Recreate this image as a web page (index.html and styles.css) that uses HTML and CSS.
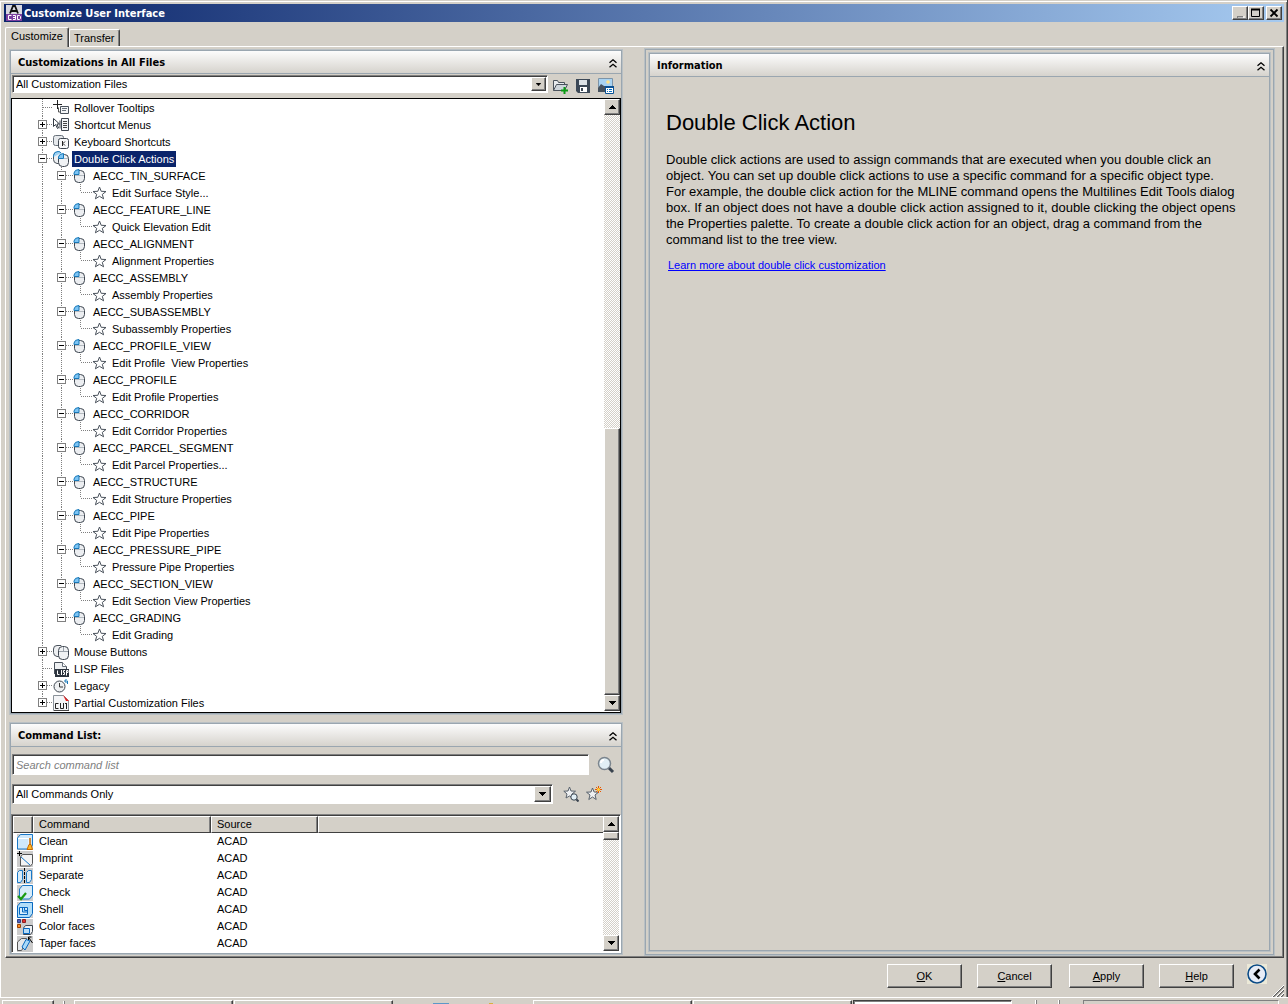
FILE: index.html
```html
<!DOCTYPE html>
<html lang="en">
<head>
<meta charset="utf-8">
<title>Customize User Interface</title>
<link rel="stylesheet" href="styles.css">
</head>
<body>
<svg class="defs" width="0" height="0" aria-hidden="true">
  <defs>
    <symbol id="up" viewBox="0 0 7 4"><path d="M3 0h1v1h1v1h1v1h1v1H0V3h1V2h1V1h1z"/></symbol>
    <symbol id="down" viewBox="0 0 7 4"><path d="M0 0h7v1H6v1H5v1H4v1H3V3H2V2H1V1H0z"/></symbol>
    <symbol id="collapse" viewBox="0 0 8 9"><path d="M.5 3.800L4 .8l3.500 3M.5 8.300L4 5.300l3.500 3" fill="none" stroke="#000" stroke-width="1.300"/></symbol>
    <symbol id="star" viewBox="0 0 16 16"><path d="M8.500 2l1.700 4.300 4.800.2-3.700 2.900 1.300 4.400-4.100-2.500-4.100 2.500 1.300-4.400L2 6.500l4.800-.2z" fill="#fff" stroke="#4a525c"/></symbol>
    <symbol id="mouse" viewBox="0 0 16 16"><rect x="2.500" y="2.500" width="10" height="12" rx="4" fill="#eceef1" stroke="#3e4650"/><path d="M2 6.500V5q.5-3.500 5-3.500v5z" fill="#7cc4f4" stroke="#1878b8"/><path d="M3 7.500h9" stroke="#b4bac0"/></symbol>
    <symbol id="mice" viewBox="0 0 16 16"><path d="M6 12.500H4Q.5 12 .5 8.500V5Q.5 1.500 4 1.500h2" fill="#eef0f2" stroke="#4a525c"/><path d="M6 1.500h2l1 1" fill="none" stroke="#4a525c"/><rect x="5.500" y="2.500" width="10" height="13" rx="4" fill="#f0f2f4" stroke="#3e4650"/><path d="M6 7.500h9M10.500 3v4" stroke="#9aa2aa"/></symbol>
    <symbol id="mice2" viewBox="0 0 16 16"><path d="M6 12.500H4Q.5 12 .5 8.500V5Q.5 1.500 4 1.500h2" fill="#eef0f2" stroke="#4a525c"/><path d="M.5 6V4.500Q1 .5 5 .5q2.500 0 3 1.500" fill="#9ed2f4" stroke="#1878b8"/><rect x="5.500" y="3.500" width="10" height="12" rx="4" fill="#f0f2f4" stroke="#3e4650"/><path d="M5.500 7.500V6q.5-3.500 5-3.500v5z" fill="#7cc4f4" stroke="#1878b8"/><path d="M11 7.500h4" stroke="#b4bac0"/></symbol>
    <symbol id="tooltip" viewBox="0 0 16 16"><path d="M4.500 0v9M0 4.500h9" stroke="#222"/><path d="M5.500 7.500V12h2" fill="none" stroke="#555"/><path d="M7.500 6.500h8v7h-8z" fill="#f4f6f8" stroke="#4a525c"/><path d="M9 8.500h5M9 10.500h4" stroke="#68717b"/></symbol>
    <symbol id="menus" viewBox="0 0 16 16"><path d="M.5 1.500v8l2-2 2 4 1-.5-1.500-4h2.500z" fill="#fff" stroke="#333b44"/><path d="M8.500 1.500h7v12h-7zM7 3.500v8" fill="#f4f6f8" stroke="#3e4650"/><path d="M10 4.500h4M10 6.500h4M10 8.500h4M10 10.500h4" stroke="#444"/></symbol>
    <symbol id="keys" viewBox="0 0 16 16"><rect x=".5" y="1.500" width="10" height="10" rx="2" fill="#e6e9ec" stroke="#68717b"/><rect x="5.500" y="4.500" width="10" height="10" rx="2" fill="#f7f8f9" stroke="#3e4650"/><path d="M9.500 7v5M12 7.500L10 9.500l2 2" fill="none" stroke="#222"/></symbol>
    <symbol id="lisp" viewBox="0 0 16 16"><path d="M1.500 13V1.500h8l4 4V10" fill="#eef0f2" stroke="#4a525c"/><path d="M9.500 1.500v4h4" fill="#fff" stroke="#68717b"/><path d="M2 8h14v8H2z" fill="#2c343e"/><path d="M4.500 9.500v4h2M8.500 9v5M12 9.500h-1.500v2h1v2H10M13.500 14.500v-5H15v2h-1" fill="none" stroke="#fff"/></symbol>
    <symbol id="legacy" viewBox="0 0 16 16"><circle cx="6.500" cy="8.500" r="5.500" fill="#eef0f2" stroke="#3e4650"/><path d="M6.500 5v4H10" fill="none" stroke="#333"/><path d="M12 3h2.500v3M13.500 1l-2 2 2 2" fill="none" stroke="#1878b8"/></symbol>
    <symbol id="cui" viewBox="0 0 16 16"><path d="M.5 15.500V.5h10l5 5v10z" fill="#f4f5f7" stroke="#8a929a"/><path d="M10 0l6 6h-3z" fill="#e02020"/><path d="M5.500 8.500h-3v5h3M7.500 8v5.500h3V8M13.500 8v6M12 8.500h2" fill="none" stroke="#222"/><path d="M1 15.500h15" stroke="#444"/></symbol>
  </defs>
</svg>
<main class="window">
  <header class="titlebar">
    <svg class="appicon" width="16" height="16" viewBox="0 0 16 16"><path fill="#d8d8e0" d="M0 0h16v9H0z"/><path fill="#7b3fa0" d="M0 9h16v7H0z"/><path d="M4 8.500L7 1h2l3 7.500M5.500 6h5" fill="none" stroke="#111" stroke-width="1.800"/><path d="M5.500 10.500h-3v4h3M7 10.500h2.500v4H7M7 12.500h2.500M11.500 10.500h2l1 1v2l-1 1h-2z" fill="none" stroke="#fff"/></svg>
    <h1>Customize User Interface</h1>
    <div class="winbtns">
      <button aria-label="Minimize"><svg width="10" height="10" viewBox="0 0 10 10"><path d="M2 8h6v2H2z" fill="#808080"/><path d="M3 10h6V8" stroke="#fff" fill="none"/></svg></button><button aria-label="Maximize"><svg width="10" height="10" viewBox="0 0 10 10"><path d="M.5 1.500h8v7h-8z" fill="none" stroke="#000"/><path d="M0 1.500h9" stroke="#000" stroke-width="2"/></svg></button>
      <button class="close" aria-label="Close"><svg width="10" height="10" viewBox="0 0 10 10"><path d="M1.500 1.500l7 7M8.500 1.500l-7 7" stroke="#000" stroke-width="1.800"/></svg></button>
    </div>
  </header>
  <nav class="tabs"><button class="tab on">Customize</button><button class="tab">Transfer</button></nav>
  <div class="page">
    <div class="left">
      <section class="panel files">
        <header class="bar"><h2>Customizations in All Files</h2><button class="fold" aria-label="Collapse"><svg width="8" height="9"><use href="#collapse"/></svg></button></header>
        <div class="filter">
          <div class="combo flat"><select aria-label="Customization files"><option>All Customization Files</option></select><span class="drop"><svg width="5" height="3"><use href="#down"/></svg></span></div>
          <button class="tool" aria-label="Load file"><svg width="16" height="16" viewBox="0 0 16 16"><path d="M1.500 12.500v-10h4l1 2h6v2" fill="#e8ebee" stroke="#4a525c"/><path d="M1.500 12.500l3-6h11l-3 6z" fill="#cfd6dc" stroke="#4a525c"/><path d="M12.500 9v7M9 12.500h7" stroke="#0a9a14" stroke-width="2"/></svg></button>
          <button class="tool" aria-label="Save"><svg width="16" height="16" viewBox="0 0 16 16"><path d="M1 1h14v14H3l-2-2z" fill="#3c4856"/><path d="M4 2h8v5H4z" fill="#dde3e8"/><path d="M5 9h7v5H5z" fill="#fff"/><path d="M6 10h2v3H6z" fill="#3c4856"/></svg></button>
          <button class="tool" aria-label="Image manager"><svg width="16" height="16" viewBox="0 0 16 16"><path d="M.5.5h14v12H.5z" fill="#a9d3f2" stroke="#7d94a8"/><path d="M0 10l3-4 3 2 3 0v6H0z" fill="#46525e"/><circle cx="10" cy="4" r="1.800" fill="#ffe28a"/><path d="M7.500 8.500h8v7h-8z" fill="#fff" stroke="#0b5294"/><path d="M7 9h9" stroke="#0b5294" stroke-width="2"/><path d="M9 11.500h1m1 0h3M9 13.500h1m1 0h3" stroke="#0b72c4"/></svg></button>
        </div>
        <div class="treebox">
          <ul class="tree">
            <li class="a leaf"><svg><use href="#tooltip"/></svg><span>Rollover Tooltips</span></li>
            <li class="a"><button class="exp plus" aria-label="Expand"></button><svg><use href="#menus"/></svg><span>Shortcut Menus</span></li>
            <li class="a"><button class="exp plus" aria-label="Expand"></button><svg><use href="#keys"/></svg><span>Keyboard Shortcuts</span></li>
            <li class="a"><button class="exp" aria-label="Collapse"></button><svg><use href="#mice2"/></svg><span class="sel">Double Click Actions</span></li>
            <li class="b"><button class="exp" aria-label="Collapse"></button><svg><use href="#mouse"/></svg><span>AECC_TIN_SURFACE</span></li>
            <li class="c"><svg><use href="#star"/></svg><span>Edit Surface Style...</span></li>
            <li class="b"><button class="exp" aria-label="Collapse"></button><svg><use href="#mouse"/></svg><span>AECC_FEATURE_LINE</span></li>
            <li class="c"><svg><use href="#star"/></svg><span>Quick Elevation Edit</span></li>
            <li class="b"><button class="exp" aria-label="Collapse"></button><svg><use href="#mouse"/></svg><span>AECC_ALIGNMENT</span></li>
            <li class="c"><svg><use href="#star"/></svg><span>Alignment Properties</span></li>
            <li class="b"><button class="exp" aria-label="Collapse"></button><svg><use href="#mouse"/></svg><span>AECC_ASSEMBLY</span></li>
            <li class="c"><svg><use href="#star"/></svg><span>Assembly Properties</span></li>
            <li class="b"><button class="exp" aria-label="Collapse"></button><svg><use href="#mouse"/></svg><span>AECC_SUBASSEMBLY</span></li>
            <li class="c"><svg><use href="#star"/></svg><span>Subassembly Properties</span></li>
            <li class="b"><button class="exp" aria-label="Collapse"></button><svg><use href="#mouse"/></svg><span>AECC_PROFILE_VIEW</span></li>
            <li class="c"><svg><use href="#star"/></svg><span>Edit Profile&nbsp; View Properties</span></li>
            <li class="b"><button class="exp" aria-label="Collapse"></button><svg><use href="#mouse"/></svg><span>AECC_PROFILE</span></li>
            <li class="c"><svg><use href="#star"/></svg><span>Edit Profile Properties</span></li>
            <li class="b"><button class="exp" aria-label="Collapse"></button><svg><use href="#mouse"/></svg><span>AECC_CORRIDOR</span></li>
            <li class="c"><svg><use href="#star"/></svg><span>Edit Corridor Properties</span></li>
            <li class="b"><button class="exp" aria-label="Collapse"></button><svg><use href="#mouse"/></svg><span>AECC_PARCEL_SEGMENT</span></li>
            <li class="c"><svg><use href="#star"/></svg><span>Edit Parcel Properties...</span></li>
            <li class="b"><button class="exp" aria-label="Collapse"></button><svg><use href="#mouse"/></svg><span>AECC_STRUCTURE</span></li>
            <li class="c"><svg><use href="#star"/></svg><span>Edit Structure Properties</span></li>
            <li class="b"><button class="exp" aria-label="Collapse"></button><svg><use href="#mouse"/></svg><span>AECC_PIPE</span></li>
            <li class="c"><svg><use href="#star"/></svg><span>Edit Pipe Properties</span></li>
            <li class="b"><button class="exp" aria-label="Collapse"></button><svg><use href="#mouse"/></svg><span>AECC_PRESSURE_PIPE</span></li>
            <li class="c"><svg><use href="#star"/></svg><span>Pressure Pipe Properties</span></li>
            <li class="b"><button class="exp" aria-label="Collapse"></button><svg><use href="#mouse"/></svg><span>AECC_SECTION_VIEW</span></li>
            <li class="c"><svg><use href="#star"/></svg><span>Edit Section View Properties</span></li>
            <li class="b end"><button class="exp" aria-label="Collapse"></button><svg><use href="#mouse"/></svg><span>AECC_GRADING</span></li>
            <li class="c end"><svg><use href="#star"/></svg><span>Edit Grading</span></li>
            <li class="a"><button class="exp plus" aria-label="Expand"></button><svg><use href="#mice"/></svg><span>Mouse Buttons</span></li>
            <li class="a leaf"><svg><use href="#lisp"/></svg><span>LISP Files</span></li>
            <li class="a"><button class="exp plus" aria-label="Expand"></button><svg><use href="#legacy"/></svg><span>Legacy</span></li>
            <li class="a end"><button class="exp plus" aria-label="Expand"></button><svg><use href="#cui"/></svg><span>Partial Customization Files</span></li>
          </ul>
          <div class="scroll low"><button aria-label="Scroll up"><svg width="7" height="4"><use href="#up"/></svg></button><span class="track"><span class="thumb"></span></span><button aria-label="Scroll down"><svg width="7" height="4"><use href="#down"/></svg></button></div>
        </div>
      </section>
      <section class="panel commands">
        <header class="bar"><h2>Command List:</h2><button class="fold" aria-label="Collapse"><svg width="8" height="9"><use href="#collapse"/></svg></button></header>
        <div class="find">
          <input type="text" aria-label="Search command list" placeholder="Search command list">
          <button class="tool" aria-label="Search"><svg width="18" height="18" viewBox="0 0 18 18"><path d="M11 11l5 5" stroke="#39434e" stroke-width="3"/><circle cx="7.500" cy="7.500" r="6" fill="#e2eff5" stroke="#7b858e" stroke-width="1.500"/><path d="M4 7q0-3 3-3" stroke="#fff" stroke-width="2" fill="none"/></svg></button>
        </div>
        <div class="category">
          <div class="combo"><select aria-label="Command category"><option>All Commands Only</option></select><span class="drop"><svg width="7" height="4"><use href="#down"/></svg></span></div>
          <button class="tool" aria-label="Find command"><svg width="16" height="16" viewBox="0 0 16 16"><path d="M6.500 1l1.500 4 4.500.2L9 8l1 4-3.500-2L3 12l1-4L.8 5.200 5 5z" fill="#eef0f2" stroke="#59626c"/><path d="M13 13l2.500 2.500" stroke="#39434e" stroke-width="2"/><circle cx="11" cy="11" r="3.200" fill="#e2eff5" stroke="#39434e"/></svg></button>
          <button class="tool" aria-label="New command"><svg width="16" height="16" viewBox="0 0 16 16"><path d="M6.500 2l1.600 4 4.400.2L9 9l1.200 4.500-3.700-2.500-3.700 2.500L4 9 .5 6.200 5 6z" fill="#eef0f2" stroke="#59626c"/><path d="M12.500 0v7M9 3.500h7M10 1l5 5M15 1l-5 5" stroke="#e85a00"/><circle cx="12.500" cy="3.500" r="1.500" fill="#ffd83a"/></svg></button>
        </div>
        <div class="listbox">
          <table>
            <colgroup><col class="c1"><col class="c2"><col class="c3"><col></colgroup>
            <thead><tr><th aria-label="Image"></th><th>Command</th><th>Source</th><th class="rest"></th></tr></thead>
            <tbody>
              <tr><td><svg viewBox="0 0 16 16"><path fill="#ccc" d="M0 0h16v16H0z"/><path d="M.5 4l3-3.500h12v11l-3 3.500H.5z" fill="#cfe8fa" stroke="#1878c8"/><path d="M1 4.500h11v10" fill="none" stroke="#fff"/><path d="M10 15.500l2-5h1V4v6.500h1l1.500 5z" fill="#ffb820" stroke="#c86800"/></svg></td><td>Clean</td><td>ACAD</td><td></td></tr>
              <tr><td><svg viewBox="0 0 16 16"><path fill="#ccc" d="M0 0h16v16H0z"/><path d="M3.500 6l2-2.500h10v9l-2 2.500h-10z" fill="#f4f4f4" stroke="#555"/><path d="M2.500 0v5M0 2.500h5" stroke="#000"/><path d="M4 6l9 8" stroke="#1878c8"/></svg></td><td>Imprint</td><td>ACAD</td><td></td></tr>
              <tr><td><svg viewBox="0 0 16 16"><path fill="#ccc" d="M0 0h16v16H0z"/><path d="M.5 4.500l2-2h3v9l-2 3h-3zM9.500 4.500l2-2h3v9l-2 3h-3z" fill="#d8ebf8" stroke="#1878c8"/><path d="M7.500 0v16" stroke="#000" stroke-dasharray="3 1"/></svg></td><td>Separate</td><td>ACAD</td><td></td></tr>
              <tr><td><svg viewBox="0 0 16 16"><path fill="#ccc" d="M0 0h16v16H0z"/><path d="M2.500 4l3-3.500h10v10l-3 3.500h-10z" fill="#d8ebf8" stroke="#1878c8"/><path d="M1 11l3 3 5-6" fill="none" stroke="#1a9a10" stroke-width="2.200"/></svg></td><td>Check</td><td>ACAD</td><td></td></tr>
              <tr><td><svg viewBox="0 0 16 16"><path fill="#ccc" d="M0 0h16v16H0z"/><path d="M.5 4l3-3.500h12v11l-3 4H.5z" fill="#b2def8" stroke="#0868c0"/><path d="M2.500 5.500h8v7h-8zM5.500 6v4h5M7.500 6v2.500h3" fill="#d8effc" stroke="#0868c0"/></svg></td><td>Shell</td><td>ACAD</td><td></td></tr>
              <tr><td><svg viewBox="0 0 16 16"><path fill="#ccc" d="M0 0h16v16H0z"/><path d="M.5.500h3v3h-3z" fill="#5060c0" stroke="#304080"/><path d="M5.500.500h3v3h-3z" fill="#e03030" stroke="#902020"/><path d="M.5 5.500h3v3h-3z" fill="#ff9020" stroke="#a04000"/><path d="M6.500 9l2-2.500h7v6l-2 3h-7z" fill="#f0f2f4" stroke="#3e4650"/><path d="M6.500 9.500h6v5h-6z" fill="#b8dcf6" stroke="#0868c0"/></svg></td><td>Color faces</td><td>ACAD</td><td></td></tr>
              <tr><td><svg viewBox="0 0 16 16"><path fill="#ccc" d="M0 0h16v16H0z"/><path d="M.5 14.500V6l4-3.500h5v4l-5 8z" fill="#e4e7ea" stroke="#555"/><path d="M5 11l4-7.500 4 1.500-5 9z" fill="#a8d8f8" stroke="#0868c0"/><path d="M15.500 7l-3.500-5M11.500 4V1h3" stroke="#000" fill="none"/></svg></td><td>Taper faces</td><td>ACAD</td><td></td></tr>
            </tbody>
          </table>
          <div class="scroll top"><button aria-label="Scroll up"><svg width="7" height="4"><use href="#up"/></svg></button><span class="track"><span class="thumb"></span></span><button aria-label="Scroll down"><svg width="7" height="4"><use href="#down"/></svg></button></div>
        </div>
      </section>
    </div>
    <section class="info">
      <div class="infobox">
        <header class="bar"><h2>Information</h2><button class="fold" aria-label="Collapse"><svg width="8" height="9"><use href="#collapse"/></svg></button></header>
        <article>
          <h3>Double Click Action</h3>
          <p>Double click actions are used to assign commands that are executed when you double click an object. You can set up double click actions to use a specific command for a specific object type. For example, the double click action for the MLINE command opens the Multilines Edit Tools dialog box. If an object does not have a double click action assigned to it, double clicking the object opens the Properties palette. To create a double click action for an object, drag a command from the command list to the tree view.</p>
          <a href="#learn">Learn more about double click customization</a>
        </article>
      </div>
    </section>
  </div>
  <footer class="actions">
    <button class="push">OK</button><button class="push">Cancel</button><button class="push apply">Apply</button><button class="push">Help</button>
    <button class="round" aria-label="Less"><svg width="20" height="20" viewBox="0 0 20 20"><circle cx="10" cy="10" r="9" fill="#e8ecf6" stroke="#0b4a86" stroke-width="1.600"/><path d="M12.500 5.500L8 10l4.500 4.500" fill="none" stroke="#000" stroke-width="2.600"/></svg></button>
    <svg class="grip" width="12" height="12" viewBox="0 0 12 12"><path d="M1 12L12 1M5 12l7-7M9 12l3-3" stroke="#606060" stroke-width="1.500"/><path d="M0 12L12 0M4 12l8-8M8 12l4-4" stroke="#fff"/></svg>
  </footer>
</main>
<div class="taskbar">
  <span class="task start red"></span><span class="tick"></span>
  <span class="task gold"></span><span class="task"></span>
  <span class="rest"><i class="blue"></i><i class="yellow"></i></span>
  <span class="task sky"></span><span class="task red"></span><span class="task pressed red"></span>
  <span class="rest short"><i class="tick"></i><i class="tick"></i></span><span class="tray"></span>
</div>
</body>
</html>
```
FILE: styles.css
```css
* { box-sizing: border-box; }
body { margin: 0; min-height: 100vh; display: flex; flex-direction: column; background: #d4d0c8; color: #000; font: 11px/13px "Liberation Sans", Arial, sans-serif; }
button, input, select { font: inherit; color: inherit; padding: 0; margin: 0; border: 0; background: none; border-radius: 0; }
h1, h2, h3, p, ul { margin: 0; padding: 0; }
svg { display: block; flex: none; }
.defs { position: absolute; }
.window { flex: 1; display: flex; flex-direction: column; padding: 4px 3px 0 4px; border: solid #404040; border-width: 0 1px 0 0; box-shadow: inset 0 1px #d4d0c8, inset 1px 2px #fff, inset -1px 0 #808080; }

/* title bar */
.titlebar { height: 18px; display: flex; align-items: center; gap: 2px; padding: 0 2px; background: linear-gradient(90deg, #0a246a, #a6caf0); color: #fff; }
h1, h2 { font: bold 11px/14px "DejaVu Sans Condensed", "DejaVu Sans", sans-serif; }
h1 { flex: 1; padding-top: 1px; }
.winbtns { display: flex; }
.winbtns button, .scroll button, .thumb, .drop { display: flex; align-items: center; justify-content: center; background: #d4d0c8; border: 1px solid; border-color: #fff #404040 #404040 #fff; box-shadow: inset -1px -1px #808080; }
.winbtns button { width: 16px; height: 14px; }
.winbtns .close { margin-left: 2px; }

/* tabs */
.tabs { position: relative; display: flex; align-items: flex-end; height: 25px; margin-bottom: -1px; padding-left: 1px; }
.tab { height: 17px; margin-bottom: 1px; padding: 1px 4px 0; border: 1px solid; border-color: #fff #404040 transparent #fff; border-bottom: 0; border-radius: 2px 2px 0 0; box-shadow: inset -1px 0 #808080; }
.tab.on { height: 20px; margin: 0; padding: 0 5px 2px 5px; background: #d4d0c8; }

/* panels */
.page { flex: 1; display: grid; grid-template-columns: 614fr 629fr; column-gap: 22px; margin: 0 0 0 1px; padding: 2px 9px 2px 3px; border: 1px solid; border-color: #fff #404040 #404040 #fff; box-shadow: inset -1px -1px #808080; }
.left { min-width: 0; display: flex; flex-direction: column; gap: 7px; }
.panel, .info, .infobox { border: 1px solid #9aa6b0; box-shadow: 0 0 0 1px #b9c0c4; }
.panel { margin: 1px; }
.bar { display: flex; align-items: center; justify-content: space-between; height: 23px; padding: 0 4px 0 7px; border-bottom: 1px solid #9aa6b0; background: linear-gradient(#fcfcfc, #d6d3cd); }
.bar h2 { padding-top: 2px; }
.fold { padding-top: 2px; }
.filter { display: flex; align-items: center; height: 24px; padding: 0 7px 0 1px; }
.combo { flex: 1; display: flex; height: 20px; padding: 1px; background: #fff; border: 1px solid; border-color: #808080 #fff #fff #808080; box-shadow: inset 1px 1px #404040; }
.combo select { flex: 1; appearance: none; padding-left: 2px; outline: 0; }
.drop { width: 17px; height: 16px; }
.combo.flat { height: 18px; align-self: flex-start; margin: 1px 4px 0 0; }
.flat .drop { width: 15px; height: 14px; }
.tool + .tool { margin-left: 7px; }

/* customization tree */
.treebox { display: flex; padding-bottom: 1px; border: 1px solid #000; background: #fff; }
.tree { flex: 1; list-style: none; }
.tree li { --v: repeating-linear-gradient(#808080 0 1px, transparent 1px 2px); --h: repeating-linear-gradient(90deg, #808080 0 1px, transparent 1px 2px); display: flex; align-items: center; height: 17px; background-repeat: no-repeat; }
.tree svg { width: 16px; height: 16px; margin: 0 3px 0 6px; }
.tree span { padding: 1px 2px; height: 16px; line-height: 14px; white-space: pre; }
.tree .sel { background: #0a246a; color: #fff; }
.tree .a { padding-left: 26px; background-image: var(--v), var(--h); background-size: 1px 100%, 10px 1px; background-position: 30px 0, 31px 8px; }
.tree .a.leaf { padding-left: 35px; }
.tree .a.end { background-size: 1px 8px, 10px 1px; }
.tree .b { padding-left: 45px; background-image: var(--v), var(--v), var(--h); background-size: 1px 100%, 1px 100%, 11px 1px; background-position: 30px 0, 49px 0, 50px 8px; }
.tree .b.end { background-size: 1px 100%, 1px 8px, 11px 1px; }
.tree .c { padding-left: 73px; background-image: var(--v), var(--v), var(--v), var(--h); background-size: 1px 100%, 1px 100%, 1px 8px, 11px 1px; background-position: 30px 0, 49px 0, 68px 0, 69px 8px; }
.tree .c.end { background-size: 1px 100%, 0 0, 1px 8px, 11px 1px; }
.exp { width: 9px; height: 9px; border: 1px solid #808080; background: linear-gradient(#000, #000) center / 5px 1px no-repeat #fff; }
.plus { background: linear-gradient(#000, #000) center / 5px 1px no-repeat, linear-gradient(#000, #000) center / 1px 5px no-repeat #fff; }

/* scroll bars */
.scroll { flex: none; width: 16px; display: flex; flex-direction: column; background: repeating-conic-gradient(#fff 0 25%, #d4d0c8 0 50%) 0 0 / 2px 2px; }
.scroll button { height: 16px; }
.track { flex: 1; display: flex; flex-direction: column; }
.low .track { justify-content: flex-end; }
.low .thumb { height: 46%; }
.top .thumb { height: 8px; }

/* command list */
.find, .category { display: flex; align-items: center; }
.find { padding: 7px 6px 0 1px; gap: 8px; height: 28px; }
.find input { flex: 1; height: 21px; padding: 0 3px; background: #fff; border: 1px solid; border-color: #808080 #fff #fff #808080; box-shadow: inset 1px 1px #404040; }
.find input::placeholder { color: #808080; font-style: italic; opacity: 1; }
.category { padding: 9px 19px 10px 1px; }
.category .combo { margin-right: 10px; }
.listbox { display: flex; height: 139px; overflow: hidden; background: #fff; border: 1px solid; border-color: #808080 #fff #fff #808080; box-shadow: inset 1px 1px #404040; padding: 1px; }
table { flex: 1; table-layout: fixed; border-collapse: separate; border-spacing: 0; align-self: flex-start; }
.c1 { width: 20px; }
.c2 { width: 178px; }
.c3 { width: 107px; }
th { height: 17px; padding: 0 5px; text-align: left; font-weight: normal; background: #d4d0c8; border: 1px solid; border-color: #fff #404040 #404040 #fff; box-shadow: inset -1px 0 #808080; }
th.rest { border-right: 0; box-shadow: none; }
td { height: 17px; padding: 0 6px; }
td:first-child { padding: 0 0 0 4px; }
td svg { width: 16px; height: 16px; }

/* information pane */
.info { padding: 3px; }
.infobox { height: 100%; }
article { padding: 33px 33px 0 16px; font-size: 13px; line-height: 16px; }
h3 { font-size: 22px; line-height: 26px; font-weight: normal; margin-bottom: 16px; }
article a { display: inline-block; margin: 10px 0 0 2px; font-size: 11px; line-height: 14px; color: #00f; }

/* dialog buttons */
.actions { display: flex; align-items: flex-start; gap: 15px; height: 39px; padding: 6px 0 0; justify-content: flex-end; }
.push { width: 75px; height: 24px; border: 1px solid; border-color: #fff #404040 #404040 #fff; box-shadow: inset -1px -1px #808080; }
.push::first-letter { text-decoration: underline; }
.apply { margin-left: 2px; }
.round { margin-left: -2px; background: #ece9d8; }
.grip { align-self: flex-end; margin-left: -10px; }

/* top edge of the task bar */
.taskbar { display: flex; height: 7px; overflow: hidden; padding: 2px 9px 0 2px; gap: 1px; border-top: 1px solid #fff; }
.task { flex: none; width: 159px; padding: 3px 0 0 6px; border: 1px solid; border-color: #fff #404040 transparent #fff; border-bottom: 0; box-shadow: inset -1px 0 #808080; }
.task::before { content: ""; display: block; height: 1px; width: 0; }
.task.start { width: 52px; }
.task.pressed { background: #fff; border-color: #404040 #fff #fff #404040; box-shadow: inset 1px 1px #808080; }
.red::before { width: 3px; margin-left: 3px; background: #c00000; }
.gold::before { width: 14px; background: #d8a820; }
.sky::before { width: 12px; background: #5c98c8; }
.tick { width: 2px; height: 4px; margin: 1px 8px 0; background: linear-gradient(90deg, #fff 50%, #808080 50%); }
.taskbar .rest { flex: 2 1 0; display: flex; justify-content: space-evenly; align-items: flex-end; }
.taskbar .short { flex-grow: 1; }
.short .tick { margin: 0; }
.blue { width: 16px; height: 1px; background: #5c98c8; }
.yellow { width: 4px; height: 1px; background: #d8b040; }
.tray { flex: none; width: 196px; border: 1px solid; border-color: #808080 #fff transparent #808080; border-bottom: 0; }
```
